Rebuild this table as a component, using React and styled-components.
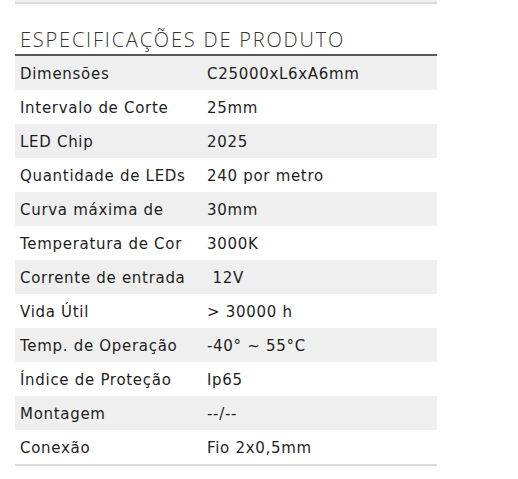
import React from "react";
import styled, { createGlobalStyle } from "styled-components";

const GlobalStyle = createGlobalStyle`
  body {
    margin: 0;
    background: #fff;
    font-family: "DejaVu Sans", "Open Sans", sans-serif;
    color: #222;
  }
`;

const Page = styled.div`
  width: 422px;
  margin-left: 15px;
`;

const TopBar = styled.div`
  height: 2px;
  background: #f0f0f0;
  border-bottom: 2px solid #dcdcdc;
`;

const Title = styled.h2`
  margin: 24px 0 0;
  padding: 0 5px 2px;
  font-family: "Open Sans", sans-serif;
  font-size: 20px;
  font-weight: 300;
  letter-spacing: 1.8px;
  color: #333;
  line-height: 24px;
  border-bottom: 2px solid #5a5a5a;
`;

const Table = styled.div`
  display: grid;
  grid-template-columns: 187px 1fr;
  border-bottom: 2px solid #dadada;
`;

const Row = styled.div`
  display: contents;
  & > div {
    background: ${(p) => (p.$shaded ? "#efefef" : "#fff")};
  }
`;

const Cell = styled.div`
  height: 34px;
  display: flex;
  align-items: center;
  padding: 1px 5px 0;
  box-sizing: border-box;
  font-size: 15px;
  letter-spacing: 0.7px;
  color: #1e1e1e;
  white-space: pre;
`;

const specs = [
  ["Dimensões", "C25000xL6xA6mm"],
  ["Intervalo de Corte", "25mm"],
  ["LED Chip", "2025"],
  ["Quantidade de LEDs", "240 por metro"],
  ["Curva máxima de", "30mm"],
  ["Temperatura de Cor", "3000K"],
  ["Corrente de entrada", " 12V"],
  ["Vida Útil", "> 30000 h"],
  ["Temp. de Operação", "-40° ~ 55°C"],
  ["Índice de Proteção", "Ip65"],
  ["Montagem", "--/--"],
  ["Conexão", "Fio 2x0,5mm"],
];

export default function App() {
  return (
    <>
      <GlobalStyle />
      <Page>
        <TopBar />
        <Title>ESPECIFICAÇÕES DE PRODUTO</Title>
        <Table>
          {specs.map(([label, value], i) => (
            <Row key={label} $shaded={i % 2 === 0}>
              <Cell>{label}</Cell>
              <Cell>{value}</Cell>
            </Row>
          ))}
        </Table>
      </Page>
    </>
  );
}
